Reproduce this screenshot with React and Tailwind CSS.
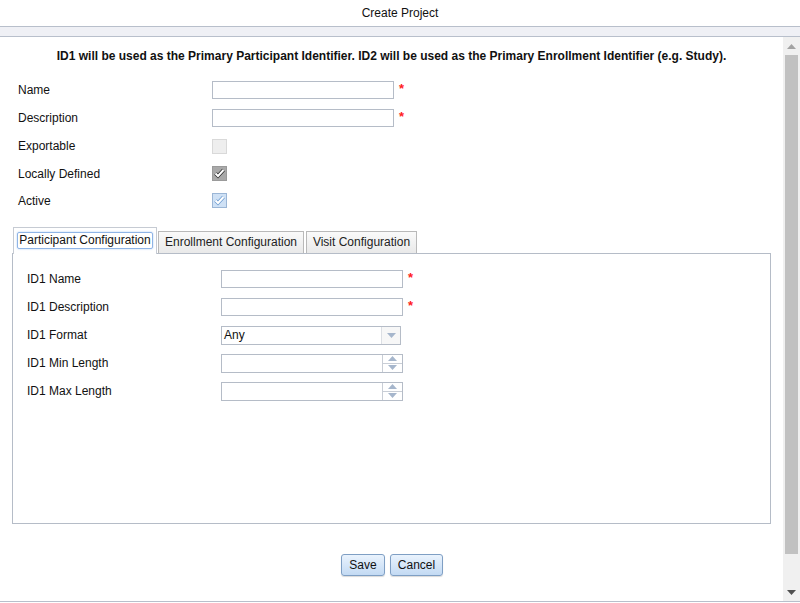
import React from "react";

const Star = () => (
  <span className="ml-[5px] self-start mt-[6px] text-[13px] font-bold leading-none text-[#ff2020]">*</span>
);

function TextInput({ star, w = "w-[182px]" }) {
  return (
    <div className="flex items-center h-full">
      <div className={`${w} h-[18px] border border-[#b5bcc7] bg-white`} />
      {star && <Star />}
    </div>
  );
}

function Checkbox({ kind }) {
  if (kind === "disabled") {
    return <div className="w-[15px] h-[15px] border border-[#d9d9d9] bg-[#eeeeee]" />;
  }
  const gray = kind === "gray";
  return (
    <div
      className={`w-[15px] h-[15px] border flex items-center justify-center ${
        gray ? "border-[#9a9a9a] bg-[#a9a9a9]" : "border-[#9bb6d6] bg-[#cfe1f5]"
      }`}
    >
      <svg width="11" height="11" viewBox="0 0 11 11">
        <path
          d="M1.5 5.5 L4 8 L9.5 2"
          fill="none"
          stroke={gray ? "#2a2a2a" : "#6a9ad0"}
          strokeWidth="3.6"
        />
        <path d="M1.5 5.5 L4 8 L9.5 2" fill="none" stroke="#fff" strokeWidth="2" />
      </svg>
    </div>
  );
}

function Row({ label, children, h = "h-[28px]", labelW = "w-[194px]" }) {
  return (
    <div className={`flex items-center ${h}`}>
      <div className={`${labelW} shrink-0 text-[#111]`}>{label}</div>
      {children}
    </div>
  );
}

function Spinner() {
  return (
    <div className="flex w-[182px] h-[19px] border border-[#b5bcc7] bg-white">
      <div className="flex-1" />
      <div className="w-[20px] border-l border-[#c9ced6] flex flex-col">
        <div className="flex-1 flex items-center justify-center border-b border-[#c9ced6]">
          <svg width="9" height="5" viewBox="0 0 9 5"><path d="M0 5 L4.5 0 L9 5Z" fill="#a6b6cc" /></svg>
        </div>
        <div className="flex-1 flex items-center justify-center">
          <svg width="9" height="5" viewBox="0 0 9 5"><path d="M0 0 L4.5 5 L9 0Z" fill="#a6b6cc" /></svg>
        </div>
      </div>
    </div>
  );
}

function Select() {
  return (
    <div className="flex w-[180px] h-[19px] border border-[#b5bcc7] bg-white">
      <div className="flex-1 pl-[2px] leading-[17px] text-[#111]">Any</div>
      <div className="w-[19px] border-l border-[#dcdfe4] bg-[#f7f7f7] flex items-center justify-center">
        <svg width="9" height="5" viewBox="0 0 9 5"><path d="M0 0 L4.5 5 L9 0Z" fill="#a6b6cc" /></svg>
      </div>
    </div>
  );
}

export default function App() {
  return (
    <div className="w-[800px] h-[603px] flex flex-col bg-white text-[12px] font-['Liberation_Sans',Arial,sans-serif] overflow-hidden">
      <div className="h-[27px] shrink-0 flex items-center justify-center border-b border-[#b8bfcb] text-[#111]">
        Create Project
      </div>
      <div className="h-[10px] shrink-0 bg-[#eff0f5] border-b border-[#b8bfcb]" />
      <div className="flex-1 flex min-h-0">
        <div className="flex-1 flex flex-col">
          <div className="pt-[12px] text-center font-bold leading-[14px] text-[#111]">
            ID1 will be used as the Primary Participant Identifier. ID2 will be used as the Primary Enrollment Identifier (e.g. Study).
          </div>
          <div className="pl-[18px] pt-[13px]">
            <Row label="Name"><TextInput star /></Row>
            <Row label="Description"><TextInput star /></Row>
            <Row label="Exportable"><Checkbox kind="disabled" /></Row>
            <Row label="Locally Defined" h="h-[27px]"><Checkbox kind="gray" /></Row>
            <Row label="Active" h="h-[27px]"><Checkbox kind="blue" /></Row>
          </div>

          <div className="mx-[12px] mt-[12px]">
            <div className="flex items-end h-[27px]">
              <div className="ml-[1px] w-[144px] h-[27px] border border-b-0 border-[#c6cbd3] bg-white flex items-center justify-center -mb-px relative z-10 pb-[1px]">
                <div className="border border-[#8fb4e6] rounded-[2px] shadow-[0_0_2px_#a9c8f0] px-[1px] leading-[15px] text-[#111]">
                  Participant Configuration
                </div>
              </div>
              <div className="ml-[1px] w-[146px] h-[22px] border border-b-0 border-[#b9b9b9] bg-gradient-to-b from-[#fafafa] to-[#e9e9e9] flex items-center justify-center pb-[1px] text-[#222]">
                Enrollment Configuration
              </div>
              <div className="ml-[2px] w-[111px] h-[22px] border border-b-0 border-[#b9b9b9] bg-gradient-to-b from-[#fafafa] to-[#e9e9e9] flex items-center justify-center pb-[1px] text-[#222]">
                Visit Configuration
              </div>
            </div>
            <div className="h-[271px] border border-[#b5bcc7] pt-[11px] pl-[14px]">
              <Row label="ID1 Name"><TextInput star /></Row>
              <Row label="ID1 Description"><TextInput star /></Row>
              <Row label="ID1 Format"><Select /></Row>
              <Row label="ID1 Min Length"><Spinner /></Row>
              <Row label="ID1 Max Length"><Spinner /></Row>
            </div>
          </div>

          <div className="flex justify-center gap-[5px] mt-[30px] pl-[1px]">
            <button className="w-[44px] h-[22px] border border-[#7f9fc4] rounded-[3px] bg-gradient-to-b from-[#eaf3fd] to-[#c3daf3] text-[#111] shadow-[0_1px_1px_rgba(0,0,0,0.15)]">
              Save
            </button>
            <button className="w-[53px] h-[22px] border border-[#7f9fc4] rounded-[3px] bg-gradient-to-b from-[#eaf3fd] to-[#c3daf3] text-[#111] shadow-[0_1px_1px_rgba(0,0,0,0.15)]">
              Cancel
            </button>
          </div>
        </div>

        <div className="w-[17px] shrink-0 bg-[#f0f0f0] flex flex-col items-center">
          <div className="h-[18px] flex items-center justify-center">
            <svg width="9" height="5" viewBox="0 0 9 5"><path d="M0 5 L4.5 0 L9 5Z" fill="#a3a3a3" /></svg>
          </div>
          <div className="w-[13px] flex-1 bg-[#c1c1c1] mb-[31px]" />
          <div className="h-[14px] flex items-center justify-center mb-[2px]">
            <svg width="9" height="5" viewBox="0 0 9 5"><path d="M0 0 L4.5 5 L9 0Z" fill="#505050" /></svg>
          </div>
        </div>
      </div>
      <div className="h-[2px] shrink-0 border-t border-[#b8bfcb]" />
    </div>
  );
}
